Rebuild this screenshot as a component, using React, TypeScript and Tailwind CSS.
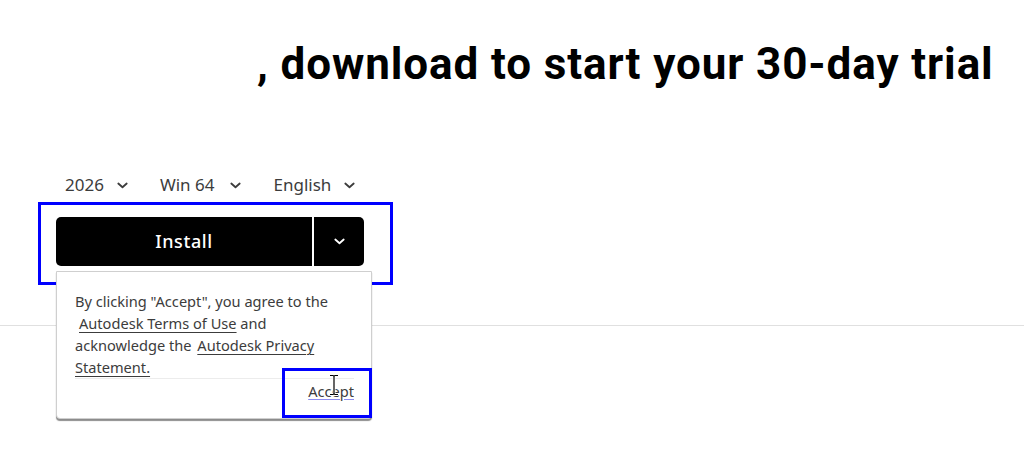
import React from "react";

function Chevron({ className = "" }: { className?: string }) {
  return (
    <svg width="11" height="7" viewBox="0 0 11 7" className={className} fill="none">
      <path d="M1.3 1.5 L5.5 5.2 L9.7 1.5" stroke="currentColor" strokeWidth="1.8" strokeLinecap="round" strokeLinejoin="round" />
    </svg>
  );
}

function Select({ label, gap }: { label: string; gap: string }) {
  return (
    <div className={`flex items-center ${gap} text-[#3c3c3c]`}>
      <span>{label}</span>
      <Chevron />
    </div>
  );
}

export default function App() {
  return (
    <div
      className="relative w-[1024px] h-[463px] overflow-hidden bg-white text-[#3c3c3c]"
      style={{ fontFamily: '"Noto Sans", "Open Sans", sans-serif' }}
    >
      <div className="absolute left-0 right-0 top-[325px] h-px bg-[#e0e0e0]" />

      <div className="relative pt-[35px] pl-[257px]">
        <h1
          className="text-[44px] font-bold leading-[58px] text-black tracking-[0.9px] whitespace-nowrap"
          style={{ fontFamily: 'Roboto, "Noto Sans", sans-serif' }}
        >
          , download to start your 30-day trial
        </h1>
      </div>

      <div className="relative mt-[81px] pl-[65px] flex items-center gap-[32px] text-[17px] leading-[22px]">
        <Select label="2026" gap="gap-[13px]" />
        <Select label="Win 64" gap="gap-[16px]" />
        <Select label="English" gap="gap-[13px]" />
      </div>

      <div className="relative mt-[21px] ml-[56px] w-[308px] h-[49px] flex rounded-[5px] bg-black overflow-hidden">
        <div className="flex-1 flex items-center justify-center text-white text-[18px] font-medium tracking-[0.6px]">
          Install
        </div>
        <div className="w-[2px] bg-white" />
        <div className="w-[50px] flex items-center justify-center text-white">
          <Chevron />
        </div>
      </div>

      <div className="relative z-10 mt-[5px] ml-[56px] w-[316px] h-[148px] bg-white border border-[#cfcfcf] rounded-b-[4px] shadow-[0_2px_1px_rgba(0,0,0,0.45)] pl-[18px] pr-[12px] pt-[18px]">
        <p className="text-[14.6px] leading-[22px] text-[#3c3c3c] whitespace-nowrap">
          By clicking "Accept", you agree to the
          <br />
          <span className="ml-[4px] underline underline-offset-[3px] decoration-[#3c3c3c]">Autodesk Terms of Use</span> and
          <br />
          acknowledge the{" "}
          <span className="ml-[2px] underline underline-offset-[3px] decoration-[#3c3c3c]">Autodesk Privacy</span>
          <br />
          <span className="underline underline-offset-[3px] decoration-[#3c3c3c]">Statement.</span>
        </p>
        <div className="mr-[5px] h-px bg-[#ececec]" />
        <div className="flex justify-end pt-[1px] pr-[5px]">
          <span className="text-[14.6px] leading-[22px] text-[#3c3c3c] underline underline-offset-[2px] decoration-[#8c8cf0]">
            Accept
          </span>
        </div>
      </div>

      <div className="absolute left-[38px] top-[202px] w-[355px] h-[83px] border-[3px] border-[#0000ff]" />
      <div className="absolute z-20 left-[282px] top-[368px] w-[90px] h-[50px] border-[3px] border-[#0000ff]" />

      <svg className="absolute z-30 left-[328px] top-[374px]" width="12" height="22" viewBox="0 0 12 22">
        <path d="M2 1.5 H5 Q6 1.5 6 3 V19 Q6 20.5 5 20.5 H2 M10 1.5 H7 Q6 1.5 6 3 M6 19 Q6 20.5 7 20.5 H10" stroke="#fff" strokeWidth="3" fill="none" />
        <path d="M2 1.5 H5 Q6 1.5 6 3 V19 Q6 20.5 5 20.5 H2 M10 1.5 H7 Q6 1.5 6 3 M6 19 Q6 20.5 7 20.5 H10" stroke="#000" strokeWidth="1.2" fill="none" />
      </svg>
    </div>
  );
}
